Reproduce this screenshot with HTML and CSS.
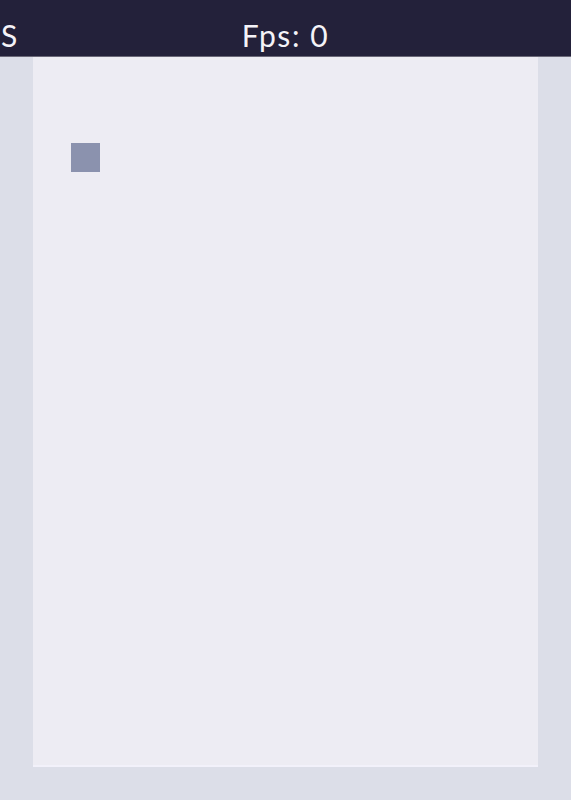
FILE: index.html
```html
<!DOCTYPE html>
<html>
<head>
<meta charset="utf-8">
<link rel="stylesheet" href="styles.css">
</head>
<body>
<header class="topbar">
  <span class="left-label">S</span>
  <span class="fps">Fps: 0</span>
</header>
<main class="stage">
  <div class="canvas">
    <div class="block"></div>
  </div>
</main>
</body>
</html>
```
FILE: styles.css
```css
html, body {
  margin: 0;
  padding: 0;
}
body {
  width: 571px;
  height: 800px;
  background: #dcdee8;
  font-family: Lato, "Liberation Sans", sans-serif;
  overflow: hidden;
}
.topbar {
  position: relative;
  height: 57px;
  background: #23213a;
  color: #f4f3f8;
  display: flex;
  justify-content: center;
  border-bottom: 1px solid #6a6878;
  box-sizing: border-box;
  font-size: 30px;
  line-height: 30px;
  letter-spacing: 1.6px;
}
.left-label {
  position: absolute;
  left: 1px;
  top: 20px;
}
.fps {
  padding-top: 20px;
  margin-left: 0;
}
.stage {
  padding: 0 33px;
}
.canvas {
  width: 505px;
  height: 710px;
  background: #edecf3;
  box-sizing: border-box;
  padding: 86px 0 0 38px;
  border-bottom: 2px solid #f2f1fa;
}
.block {
  width: 29px;
  height: 29px;
  background: #8b92ae;
}
```
